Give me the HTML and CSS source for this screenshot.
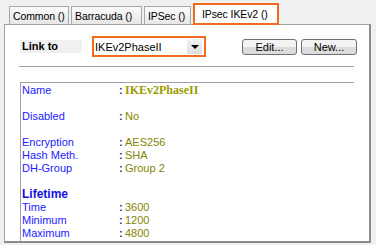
FILE: index.html
```html
<!DOCTYPE html>
<html lang="en">
<head>
  <meta charset="UTF-8">
  <title>IPsec IKEv2</title>
  <link rel="stylesheet" href="styles.css">
</head>
<body>

<div class="tabs">
  <div class="tab tab-common">Common ()</div>
  <div class="tab tab-barracuda">Barracuda ()</div>
  <div class="tab tab-ipsec">IPSec ()</div>
  <div class="tab active">IPsec IKEv2 ()</div>
</div>

<div class="panel">
  <div class="toolbar">
    <div class="link-label">Link to</div>
    <div class="combo">
      <span class="combo-text">IKEv2PhaseII</span>
      <span class="combo-arrow"></span>
    </div>
    <div class="buttons">
      <button class="btn btn-edit">Edit...</button>
      <button class="btn btn-new">New...</button>
    </div>
  </div>

  <div class="divider"></div>

  <!-- details -->
  <div class="details">
    <div class="row">
      <span class="key">Name</span><span class="colon strong">:</span><span class="val name">IKEv2PhaseII</span>
    </div>
    <div class="row spaced">
      <span class="key">Disabled</span><span class="colon">:</span><span class="val">No</span>
    </div>
    <div class="row spaced">
      <span class="key">Encryption</span><span class="colon">:</span><span class="val">AES256</span>
    </div>
    <div class="row">
      <span class="key">Hash Meth.</span><span class="colon">:</span><span class="val">SHA</span>
    </div>
    <div class="row">
      <span class="key">DH-Group</span><span class="colon">:</span><span class="val">Group 2</span>
    </div>
    <div class="section spaced">Lifetime</div>
    <div class="row">
      <span class="key">Time</span><span class="colon">:</span><span class="val">3600</span>
    </div>
    <div class="row">
      <span class="key">Minimum</span><span class="colon">:</span><span class="val">1200</span>
    </div>
    <div class="row">
      <span class="key">Maximum</span><span class="colon">:</span><span class="val">4800</span>
    </div>
  </div>
</div>

</body>
</html>
```

FILE: styles.css
```css
:root {
  --orange: #f26a1b;
  --frame: #a0a0a0;
  --blue: #1a1aff;
  --olive: #858500;
}

body {
  margin: 0;
  background: #f0f0f0;
  font-family: Tahoma, "Liberation Sans", Arial, sans-serif;
  font-size: 11px;
  color: #000;
  width: 376px;
  height: 245px;
  overflow: hidden;
}

.tabs {
  display: flex;
  align-items: flex-end;
  height: 24px;
  padding-left: 9px;
  gap: 2px;
}

.tab {
  height: 18px;
  line-height: 18px;
  padding-left: 3px;
  font-size: 10.5px;
  letter-spacing: -0.1px;
  border: 1px solid #a7a7a7;
  border-bottom: none;
  background: linear-gradient(#fbfbfb, #e6e6e6);
  white-space: nowrap;
  box-sizing: border-box;
}

.tab-common { width: 60px; }
.tab-barracuda { width: 71px; }
.tab-ipsec { width: 47px; }

.tab.active {
  position: relative;
  z-index: 2;
  width: 86px;
  height: 22px;
  line-height: 19px;
  margin-bottom: -1px;
  padding-left: 7px;
  background: #fff;
  border: 2px solid var(--orange);
}

.panel {
  position: relative;
  z-index: 1;
  margin: 0 5px 0 4px;
  height: 205px;
  overflow: hidden;
  background: #fff;
  border: 1px solid var(--frame);
  border-right: 2px solid #8c8c8c;
  border-bottom: 2px solid #8c8c8c;
  padding: 11px 12px 0 15px;
}

.toolbar {
  display: flex;
  align-items: center;
  height: 21px;
}

.link-label {
  width: 60px;
  height: 13px;
  line-height: 13px;
  padding-left: 2px;
  background: #f0f0f0;
  font-weight: bold;
}

.combo {
  display: flex;
  align-items: center;
  justify-content: space-between;
  width: 109px;
  height: 17px;
  margin-left: 10px;
  border: 2px solid var(--orange);
  padding-left: 1px;
}

.combo-arrow {
  width: 15px;
  height: 15px;
  margin-right: 2px;
  background: linear-gradient(#f4f4f4, #dedede);
  position: relative;
}

.combo-arrow::after {
  content: "";
  position: absolute;
  left: 4px;
  top: 6px;
  border-left: 4px solid transparent;
  border-right: 4px solid transparent;
  border-top: 4px solid #000;
}

.buttons {
  display: flex;
  gap: 4px;
  margin-left: auto;
}

.btn {
  height: 16px;
  padding: 0;
  font: inherit;
  border: 1px solid #707070;
  border-radius: 3px;
  background: linear-gradient(#f3f3f3 50%, #dcdcdc 50%);
}

.btn-edit { width: 55px; }
.btn-new { width: 56px; }

.divider {
  margin: 9px 3px 0 -1px;
  border-top: 1px solid var(--frame);
}

.details {
  margin: 15px 3px 0 0;
  height: 200px;
  border-top: 1px solid var(--frame);
  border-left: 1px solid var(--frame);
  padding-top: 1px;
}

.row {
  display: flex;
  height: 13px;
  line-height: 13px;
}

.spaced {
  margin-top: 13px;
}

.key {
  width: 97px;
  padding-left: 1px;
  color: var(--blue);
}

.colon {
  width: 6px;
  color: #2b2b8c;
  font-weight: bold;
}

.val {
  color: var(--olive);
}

.val.name {
  font-family: "Liberation Serif", "Times New Roman", serif;
  font-weight: bold;
  font-size: 12px;
  color: #9a9a00;
}

.section {
  height: 13px;
  line-height: 13px;
  padding-left: 1px;
  font-weight: bold;
  font-size: 12px;
  color: #1010e0;
}
```
